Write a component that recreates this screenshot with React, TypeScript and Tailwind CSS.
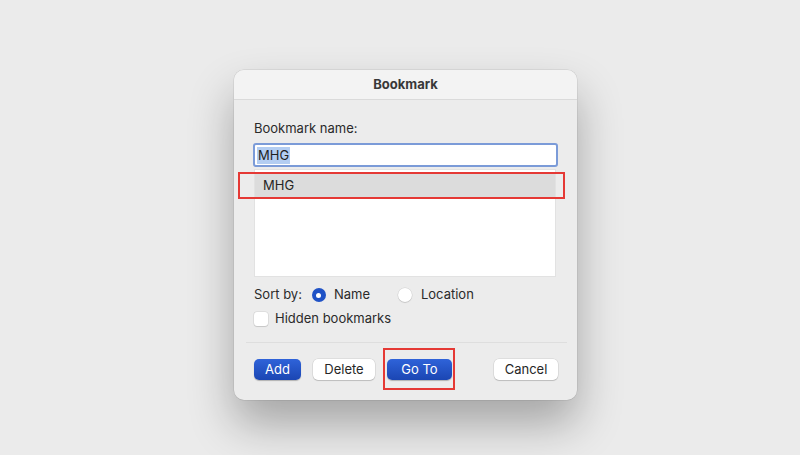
import React from "react";

const font = { fontFamily: "Inter, 'Liberation Sans', Arial, sans-serif" };

const BlueButton = ({ label, w }: { label: string; w: string }) => (
  <button
    className={`${w} h-[21px] rounded-[5px] bg-gradient-to-b from-[#2f63d9] to-[#1b46b3] text-white text-[13px] leading-none shadow-[0_1px_1px_rgba(0,0,0,0.25)] flex items-center justify-center`}
  >
    {label}
  </button>
);

const PlainButton = ({ label, w }: { label: string; w: string }) => (
  <button
    className={`${w} h-[21px] rounded-[5px] bg-white text-[#262626] text-[13px] leading-none shadow-[0_0_0_0.5px_rgba(0,0,0,0.12),0_1px_1px_rgba(0,0,0,0.15)] flex items-center justify-center`}
  >
    {label}
  </button>
);

export default function App() {
  return (
    <div className="w-[800px] h-[455px] bg-[#ebebeb] pl-[234px] pt-[70px] overflow-hidden" style={font}>
      <div className="relative w-[343px] h-[330px] rounded-[10px] bg-[#ececec] shadow-[0_24px_45px_rgba(0,0,0,0.3),0_0_0_0.5px_rgba(0,0,0,0.12)] flex flex-col">
        {/* Title bar */}
        <div className="h-[30px] rounded-t-[10px] bg-[#f3f3f3] border-b border-[#dadada] flex items-center justify-center">
          <span className="text-[13px] font-bold text-[#383838]">Bookmark</span>
        </div>

        {/* Body */}
        <div className="flex flex-col pl-[20px] pr-[19px] pt-[20px]">
          <div className="text-[13px] leading-[16px] text-[#2a2a2a]">Bookmark name:</div>

          <div className="mt-[7px] h-[24px] w-[305px] -ml-[1px] rounded-[3px] border-[2.5px] border-[#7b9bd8] bg-white flex items-center pl-[2px]">
            <span className="bg-[#b3cdf2] text-[13px] leading-[17px] text-[#1f1f1f] px-[1px]">MHG</span>
          </div>

          <div className="mt-[2px] h-[108px] w-[302px] bg-white border border-[#e2e2e2] pt-[4px]">
            <div className="h-[23px] bg-[#dcdcdc] flex items-center pl-[8px] text-[13px] text-[#262626]">MHG</div>
          </div>

          <div className="mt-[10px] h-[16px] flex items-center text-[13px] text-[#2a2a2a]">
            <span>Sort by:</span>
            <span className="ml-[10px] w-[14px] h-[14px] rounded-full bg-[#1f52c6] flex items-center justify-center">
              <span className="w-[5px] h-[5px] rounded-full bg-white" />
            </span>
            <span className="ml-[8px]">Name</span>
            <span className="ml-[28px] w-[14px] h-[14px] rounded-full bg-white shadow-[0_0_0_0.5px_rgba(0,0,0,0.12),0_1px_1px_rgba(0,0,0,0.1)]" />
            <span className="ml-[9px]">Location</span>
          </div>

          <div className="mt-[8px] h-[16px] flex items-center text-[13px] text-[#2a2a2a]">
            <span className="w-[14px] h-[14px] rounded-[3px] bg-white shadow-[0_0_0_0.5px_rgba(0,0,0,0.12),0_1px_1px_rgba(0,0,0,0.1)]" />
            <span className="ml-[7px]">Hidden bookmarks</span>
          </div>

          <div className="mt-[15px] -ml-[8px] -mr-[9px] h-px bg-[#dedede]" />

          <div className="mt-[16px] flex items-center">
            <BlueButton label="Add" w="w-[47px]" />
            <div className="ml-[12px]">
              <PlainButton label="Delete" w="w-[62px]" />
            </div>
            <div className="ml-[12px]">
              <BlueButton label="Go To" w="w-[65px]" />
            </div>
            <div className="ml-auto">
              <PlainButton label="Cancel" w="w-[64px]" />
            </div>
          </div>
        </div>

        {/* Red annotation boxes */}
        <div className="absolute left-[4px] top-[102px] w-[327px] h-[27px] border-2 border-[#e53935]" />
        <div className="absolute left-[149px] top-[278px] w-[72px] h-[42px] border-2 border-[#e53935]" />
      </div>
    </div>
  );
}
